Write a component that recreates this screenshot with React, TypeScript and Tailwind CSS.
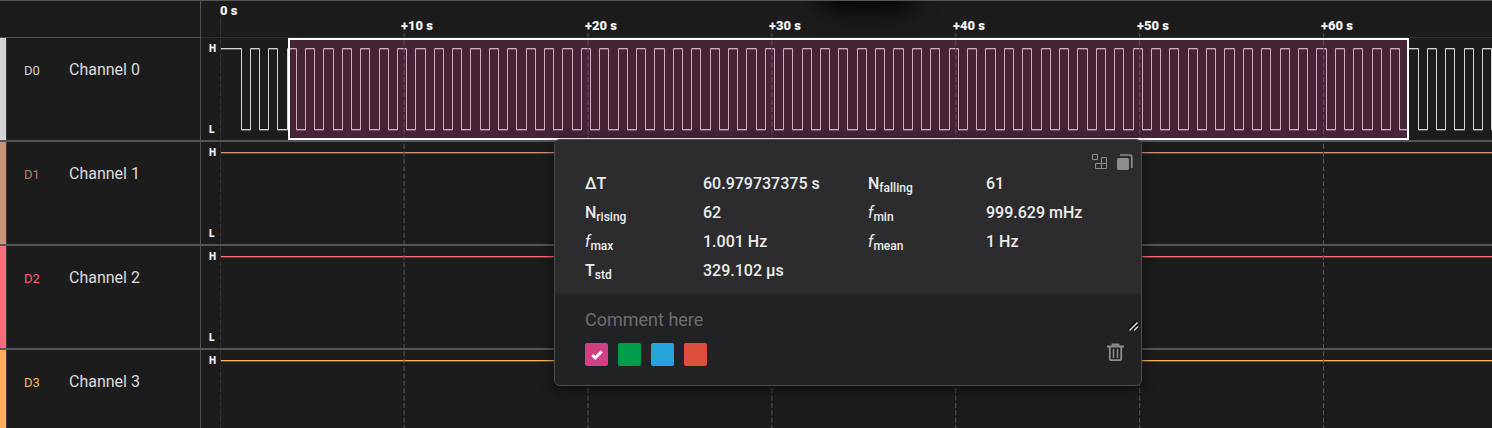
import { Check } from "lucide-react";

const PERIOD = 18.39;
const LABELS = [10, 20, 30, 40, 50, 60];
const GRID_TICKS = [...LABELS, 70, 80, 90, 100, 110, 120, 130];

const channels = [
  { id: "D0", name: "Channel 0", bar: "bg-[#d4d4d4]", text: "text-[#d4d4d4]", stroke: "#d4d4d4" },
  { id: "D1", name: "Channel 1", bar: "bg-[#c79478]", text: "text-[#b87f62]", stroke: "#d3946e" },
  { id: "D2", name: "Channel 2", bar: "bg-[#ff6b7d]", text: "text-[#ff6074]", stroke: "#ff6b7d" },
  { id: "D3", name: "Channel 3", bar: "bg-[#ffb258]", text: "text-[#ffb258]", stroke: "#ffb258" },
];

const measurements = [
  { base: "ΔT", sub: "", italic: false, value: "60.979737375 s" },
  { base: "N", sub: "falling", italic: false, value: "61" },
  { base: "N", sub: "rising", italic: false, value: "62" },
  { base: "f", sub: "min", italic: true, value: "999.629 mHz" },
  { base: "f", sub: "max", italic: true, value: "1.001 Hz" },
  { base: "f", sub: "mean", italic: true, value: "1 Hz" },
  { base: "T", sub: "std", italic: false, value: "329.102 µs" },
];

const swatches = [
  { name: "Pink", color: "bg-[#cf4182]" },
  { name: "Green", color: "bg-[#039c4b]" },
  { name: "Blue", color: "bg-[#27a4dc]" },
  { name: "Red", color: "bg-[#dd4f3a]" },
];

function clockPath() {
  let d = "M0 10.5";
  for (let i = 0; i < 140; i++) {
    const fall = Math.floor(21.1 + i * PERIOD) + 0.5;
    const rise = Math.floor(30.3 + i * PERIOD) + 0.5;
    d += `H${fall}V91.5H${rise}V10.5`;
  }
  return d;
}

const CLOCK = clockPath();

function Wave({ index, stroke }: { index: number; stroke: string }) {
  const d = index === 0 ? CLOCK : "M0 10.5H2600";
  return (
    <svg className="block h-full w-full" fill="none" aria-hidden="true">
      <path d={d} stroke={stroke} strokeOpacity="0.35" transform="translate(0 1)" />
      <path d={d} stroke={stroke} />
    </svg>
  );
}

function Grid() {
  return (
    <svg className="pointer-events-none absolute inset-0 h-full w-full" aria-hidden="true">
      <path d="M19.5 17V36" stroke="#303033" />
      <path d="M19.5 38V2000" stroke="#303033" strokeDasharray="5 2.4" />
      {GRID_TICKS.map((t) => (
        <path key={t} d={`M${t * 18.39 + 19.2} 32V2000`} stroke="#58585d" strokeDasharray="5 2.4" />
      ))}
    </svg>
  );
}

function Timeline() {
  return (
    <div className="relative h-[37px] overflow-hidden border-b border-[#2f2f32] text-[13px] leading-4 font-black text-[#f2f2f2]">
      <div className="absolute -top-5 left-[618px] h-7 w-24 rounded-full bg-black blur-md" />
      <span className="absolute top-[2px] left-[19px]">0 s</span>
      {LABELS.map((t) => (
        <span key={t} className="absolute top-[17px] whitespace-nowrap" style={{ left: t * 18.4 + 16 }}>
          +{t} s
        </span>
      ))}
    </div>
  );
}

function MeasurementPanel() {
  return (
    <section
      aria-label="Measurement"
      className="absolute top-[139px] left-[554px] w-[588px] overflow-hidden rounded-md border border-[#4c4c51] bg-[#212224] shadow-[0_4px_14px_rgba(0,0,0,0.55)]"
    >
      <div className="relative bg-[#2c2c2e] px-[30px] pt-[29px] pb-[9px]">
        <dl className="grid grid-cols-[283px_1fr] text-base leading-[29px] font-medium text-[#ececec]">
          {measurements.map((m) => (
            <div key={m.base + m.sub} className="flex">
              <dt className="w-[118px]">
                <span className={m.italic ? "font-normal italic" : ""}>{m.base}</span>
                <sub className="text-xs">{m.sub}</sub>
              </dt>
              <dd>{m.value}</dd>
            </div>
          ))}
        </dl>
        <div className="absolute top-[14px] right-2 flex gap-[9px] text-[#8d8d8f]">
          <button type="button" aria-label="Add measurements">
            <svg width="16" height="16" viewBox="0 0 16 16" fill="none" stroke="currentColor">
              <path d="M.5 .5h5v5h-5zM9.5 3.5h5v11h-11v-5h11M9.5 3.5v11" />
            </svg>
          </button>
          <button type="button" aria-label="Copy">
            <svg width="16" height="16" viewBox="0 0 16 16" fill="none">
              <rect x="0" y="4" width="12" height="12" rx="1.8" fill="currentColor" />
              <path d="M3 1h9.5a2.3 2.3 0 0 1 2.3 2.3V14" stroke="currentColor" strokeWidth="1.7" />
            </svg>
          </button>
        </div>
      </div>
      <div className="relative pt-[11px] pr-[17px] pb-[19px] pl-[30px]">
        <textarea
          aria-label="Comment"
          placeholder="Comment here"
          rows={1}
          className="block h-[29px] w-full resize-none bg-transparent pt-[3px] text-[18px] leading-6 outline-none placeholder:text-[#6d6d6f]"
        />
        <svg className="absolute top-[26px] right-[2px]" width="11" height="12" viewBox="0 0 11 12" fill="none" aria-hidden="true">
          <path d="M0 9.5L8 1.5M5 9.5L9.5 5" stroke="#080808" strokeWidth="1.6" />
          <path d="M1.5 10.5L9.5 2.5M6 10.5L10 6.5" stroke="#d6d6d6" strokeWidth="1.5" />
        </svg>
        <div className="mt-[9px] flex items-start">
          <div className="flex gap-[10px]">
            {swatches.map((s, i) => (
              <button
                key={s.name}
                type="button"
                aria-label={s.name}
                aria-pressed={i === 0}
                className={`flex h-[23px] w-[23px] items-center justify-center rounded-[2px] text-white ${s.color}`}
              >
                {i === 0 && <Check size={14} strokeWidth={5} strokeLinecap="butt" strokeLinejoin="miter" />}
              </button>
            ))}
          </div>
          <button type="button" aria-label="Delete" className="ml-auto text-[#8d8d8f]">
            <svg width="17" height="18" viewBox="0 0 17 18" fill="none" stroke="currentColor" strokeWidth="1.8">
              <path d="M0 3.5h17M5.5 3.5V1.3h6v2.2M2.8 3.5v12.2a1.5 1.5 0 0 0 1.5 1.5h8.4a1.5 1.5 0 0 0 1.5-1.5V3.5" />
              <path d="M6.5 6v9M10.5 6v9" strokeWidth="1.5" />
            </svg>
          </button>
        </div>
      </div>
    </section>
  );
}

export default function App() {
  return (
    <main className="relative h-screen overflow-hidden bg-[#1c1c1c] font-[Roboto,sans-serif]">
      <div className="flex min-h-full">
        <aside className="w-[201px] shrink-0 border-t border-r border-[#545459]">
          <div className="h-[37px] border-b border-[#545459]" />
          {channels.map((c) => (
            <div key={c.id} className="flex h-[104px] border-b-2 border-[#545459]">
              <div className={`w-[6px] ${c.bar}`} />
              <div className="flex flex-1 items-baseline gap-7 border-l border-[#3a3a3a] pt-[22px] pl-[17px]">
                <span className={`w-[17px] text-[13px] leading-5 ${c.text}`}>{c.id}</span>
                <span className="text-base leading-5 text-[#dcdcdc]">{c.name}</span>
              </div>
            </div>
          ))}
        </aside>
        <div className="relative min-w-0 flex-1 border-t border-[#545459]">
          <Grid />
          <Timeline />
          {channels.map((c, i) => (
            <div key={c.id} className="flex h-[104px] border-b-2 border-[#545459]">
              <div className="flex w-[19px] shrink-0 flex-col justify-between pt-[5px] pb-1 pl-2 text-[10px] leading-3 font-black text-[#f2f2f2]">
                <span>H</span>
                <span>L</span>
              </div>
              <div className="min-w-0 flex-1">
                <Wave index={i} stroke={c.stroke} />
              </div>
            </div>
          ))}
        </div>
      </div>
      <div className="absolute top-[38px] left-[288px] h-[102px] w-[1121px] border-2 border-white bg-[#c43b7e]/25" />
      <MeasurementPanel />
    </main>
  );
}
